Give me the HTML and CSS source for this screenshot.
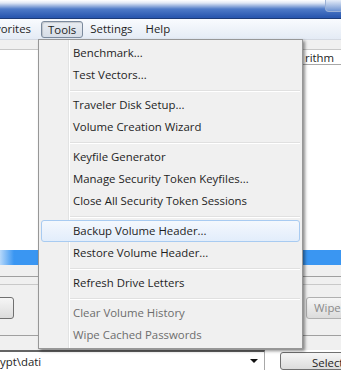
FILE: index.html
```html
<!DOCTYPE html>
<html>
<head>
  <title>Tools Menu</title>
  <link rel="stylesheet" href="styles.css">
</head>
<body>
  <div class="window">
    <div class="titlebar"><span class="winbtn"></span></div>

    <div class="menubar">
      <span class="mb-item cut"><span>Favorites</span></span>
      <span class="mb-item open">Tools</span>
      <span class="mb-item">Settings</span>
      <span class="mb-item">Help</span>
    </div>

    <div class="toolband"></div>

    <div class="list">
      <div class="list-head"><span class="col">rithm</span></div>
      <div class="list-body"></div>
      <div class="list-sel"></div>
    </div>

    <div class="panel">
      <div class="pane-line dark"></div>
      <div class="pane-line"></div>
      <div class="pane-buttons">
        <span class="btn btn-left"></span>
        <span class="btn btn-wipe">Wipe Cache</span>
      </div>
      <div class="pane-line dark last"></div>
    </div>

    <div class="bottom">
      <div class="combo">
        <span class="combo-text">ypt\dati</span>
        <span class="combo-arrow"></span>
      </div>
      <span class="btn btn-select">Select File...</span>
    </div>

    <!-- dropdown of the Tools menu -->
    <div class="menu">
      <div class="item">Benchmark...</div>
      <div class="item">Test Vectors...</div>
      <div class="sep"></div>
      <div class="item">Traveler Disk Setup...</div>
      <div class="item">Volume Creation Wizard</div>
      <div class="sep"></div>
      <div class="item">Keyfile Generator</div>
      <div class="item">Manage Security Token Keyfiles...</div>
      <div class="item">Close All Security Token Sessions</div>
      <div class="sep"></div>
      <div class="item hover">Backup Volume Header...</div>
      <div class="item">Restore Volume Header...</div>
      <div class="sep"></div>
      <div class="item">Refresh Drive Letters</div>
      <div class="sep"></div>
      <div class="item off">Clear Volume History</div>
      <div class="item off">Wipe Cached Passwords</div>
    </div>
  </div>
</body>
</html>
```

FILE: styles.css
```css
/* Window behind the menu */
body {
  margin: 0;
  background-color: #fff;
  font-family: "Open Sans", "DejaVu Sans", sans-serif;
  font-size: 11.4px;
  color: #1e1e1e;
}

.window {
  position: relative;
  width: 341px;
  height: 370px;
  overflow: hidden;
  background-color: #fff;
}

.titlebar {
  height: 18px;
  display: flex;
  justify-content: flex-end;
  background: linear-gradient(#fff 0, #dfe7f5 3px, #4f7bc8 9px, #2a58b0 17px);
  border-bottom: 1px solid #1d3c78;
}

.winbtn {
  width: 16px;
  height: 11px;
  margin-right: -2px;
  border: 1px solid #9bb1d6;
  border-top: none;
  border-radius: 0 0 4px 4px;
  background: linear-gradient(#e6edf8, #6f94d2);
}

.menubar {
  height: 20px;
  display: flex;
  align-items: center;
  gap: 1px;
  background: linear-gradient(#f9fbfe, #e4ebf5);
}

.mb-item {
  height: 17px;
  line-height: 16px;
  padding: 0 6px;
  box-sizing: border-box;
  flex-shrink: 0;
}

.mb-item.cut {
  width: 40px;
  display: flex;
  justify-content: flex-end;
  overflow: hidden;
  padding-right: 9px;
}

.mb-item.open {
  border: 1px solid #7b8a9d;
  border-radius: 3px;
  background: linear-gradient(#e9edf2, #d6dde7);
  box-shadow: inset 1px 1px 1px rgba(0, 0, 0, 0.15);
}

.toolband {
  height: 9px;
  background-color: #f0f0f0;
  border-top: 1px solid #d4d9e2;
  border-bottom: 1px solid #c8c8c8;
}

.list-head {
  height: 15px;
  display: flex;
  justify-content: flex-end;
}

.list-head .col {
  width: 36px;
  padding-left: 2px;
  line-height: 15px;
  border-left: 1px solid #d5d5d5;
  border-bottom: 1px solid #a8a8a8;
}

.list-body {
  height: 185px;
}

.list-sel {
  height: 15px;
  background: linear-gradient(90deg, #b6d8fa, #3a96f2 14px, #3a96f2);
}

/* Lower panel */
.panel {
  height: 85px;
  background-color: #f0f0f0;
}

.pane-line {
  height: 7px;
  border-bottom: 1px solid #c9c9c9;
}

.pane-line.dark {
  height: 11px;
  border-bottom-color: #a0a0a0;
}

.pane-buttons {
  height: 22px;
  margin-top: 12px;
  display: flex;
  justify-content: space-between;
}

.pane-line.last {
  height: 16px;
}

.btn {
  box-sizing: border-box;
  flex-shrink: 0;
  border: 1px solid #707070;
  border-radius: 3px;
  background: linear-gradient(#f6f6f6, #dcdcdc);
  white-space: nowrap;
}

.btn-left {
  width: 20px;
  margin-left: -6px;
}

.btn-wipe {
  width: 80px;
  margin-right: -45px;
  padding-left: 7px;
  line-height: 20px;
  color: #8a8a8a;
  border-color: #b0b0b0;
}

.bottom {
  height: 20px;
  display: flex;
  gap: 15px;
}

.combo {
  width: 265px;
  flex-shrink: 0;
  box-sizing: border-box;
  display: flex;
  align-items: center;
  justify-content: space-between;
  background-color: #fff;
  border-top: 2px solid #646464;
  border-right: 1px solid #a8a8a8;
}

.combo-arrow {
  width: 0;
  height: 0;
  margin-right: 6px;
  border-left: 4px solid transparent;
  border-right: 4px solid transparent;
  border-top: 4px solid #111;
}

.btn-select {
  width: 90px;
  margin-top: 2px;
  padding-left: 31px;
  line-height: 20px;
}

/* Tools dropdown */
.menu {
  position: absolute;
  left: 38px;
  top: 39px;
  width: 265px;
  box-sizing: border-box;
  padding: 2px 0;
  border: 1px solid #979797;
  background-color: #f0f0f0;
  background-image: linear-gradient(90deg, transparent 29px, #e2e3e3 29px, #e2e3e3 30px, #fff 30px, #fff 31px, transparent 31px);
  box-shadow: 2px 2px 3px rgba(0, 0, 0, 0.45);
}

.menu .item {
  height: 22px;
  line-height: 20px;
  margin: 0 2px;
  padding-left: 31px;
  border: 1px solid transparent;
  border-radius: 3px;
  box-sizing: border-box;
  white-space: nowrap;
}

.menu .item.hover {
  border-color: #a8cbf1;
  background: linear-gradient(#f4f8fd, #e2edfb);
}

.menu .item.off {
  color: #6d6d6d;
}

.menu .sep {
  height: 8px;
  margin: 0 2px 0 31px;
  background: linear-gradient(transparent 4px, #e0e0e0 4px, #e0e0e0 5px, #fff 5px, #fff 6px, transparent 6px);
}
```
